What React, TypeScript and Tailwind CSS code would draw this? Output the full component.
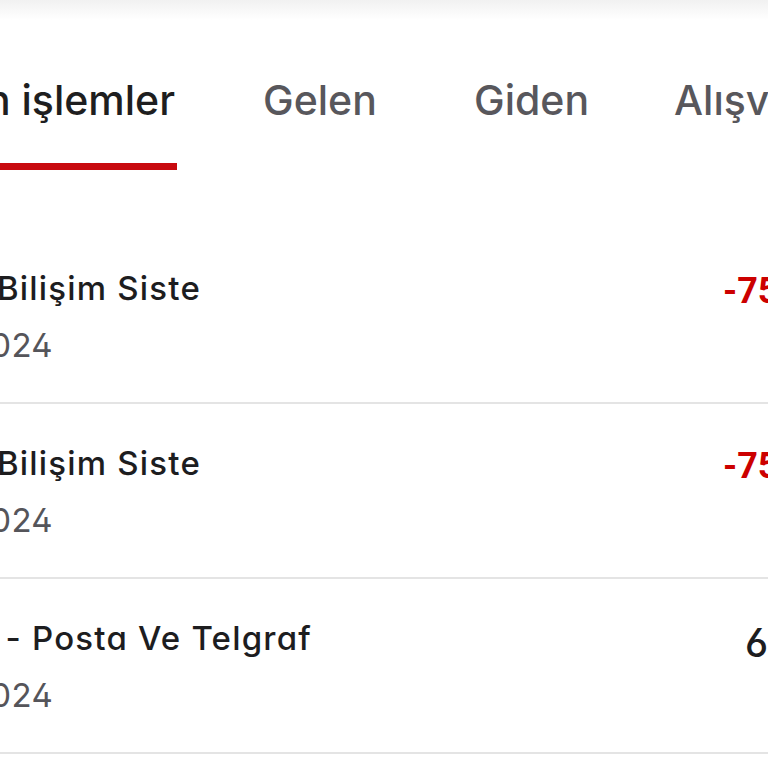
import React from "react";

const geo = "[font-family:Inter,'Noto_Sans',sans-serif] [font-feature-settings:'cv11','ss01']";

function Row({
  title,
  titleEnd,
  date,
  amount,
  amountClass,
  amountPad,
}: {
  title: string;
  titleEnd: string;
  date: string;
  amount: string;
  amountClass: string;
  amountPad: string;
}) {
  return (
    <div className="flex border-b-2 border-[#e4e4e4] pt-[43px] pb-[40px]">
      <div className="flex min-w-0 flex-1 flex-col gap-[24px]">
        <div className={`flex ${titleEnd} justify-end`}>
          <span className={`${geo} whitespace-nowrap text-[33px] leading-[33px] font-medium tracking-[1.2px] text-[#1d1d1f]`}>
            {title}
          </span>
        </div>
        <div className="flex w-[53px] justify-end">
          <span className={`${geo} whitespace-nowrap text-[33px] leading-[33px] font-normal tracking-[0.3px] text-[#55555a]`}>
            {date}
          </span>
        </div>
      </div>
      <div className={`w-[45px] shrink-0 ${amountPad}`}>
        <span className={`whitespace-nowrap ${amountClass}`}>{amount}</span>
      </div>
    </div>
  );
}

export default function App() {
  return (
    <div className="h-[768px] w-[768px] overflow-hidden bg-white">
      <div className="h-[20px] bg-gradient-to-b from-[#f1f1f1] to-white" />
      <div className="mt-[60px] flex items-start">
        <div className="flex w-[177px] shrink-0 flex-col items-end">
          <span className={`${geo} whitespace-nowrap pr-[2px] text-[41px] leading-[41px] font-medium text-[#1e1e20]`}>
            Son işlemler
          </span>
          <div className="mt-[42px] h-[7px] w-full bg-[#c80a0f]" />
        </div>
        <div className="w-[297px] shrink-0 pl-[86px]">
          <span className={`${geo} whitespace-nowrap text-[41px] leading-[41px] font-medium text-[#58575c]`}>
            Gelen
          </span>
        </div>
        <div className="w-[200px] shrink-0">
          <span className={`${geo} whitespace-nowrap text-[41px] leading-[41px] font-medium text-[#58575c]`}>
            Giden
          </span>
        </div>
        <div className="shrink-0">
          <span className={`${geo} whitespace-nowrap text-[41px] leading-[41px] font-medium text-[#58575c]`}>
            Alışveriş
          </span>
        </div>
      </div>
      <div className="mt-[59px]">
        <Row
          title="Turkcell Bilişim Siste"
          titleEnd="w-[201px]"
          date="08.05.2024"
          amount="-750,00 TL"
          amountClass="[font-family:Roboto,'Liberation_Sans',sans-serif] font-bold text-[36px] leading-[33px] text-[#cc0000] relative top-[3px]"
          amountPad=""
        />
        <Row
          title="Turkcell Bilişim Siste"
          titleEnd="w-[201px]"
          date="03.05.2024"
          amount="-750,00 TL"
          amountClass="[font-family:Roboto,'Liberation_Sans',sans-serif] font-bold text-[36px] leading-[33px] text-[#cc0000] relative top-[3px]"
          amountPad=""
        />
        <Row
          title="Ptt - Posta Ve Telgraf"
          titleEnd="w-[312px]"
          date="02.05.2024"
          amount="650,00 TL"
          amountClass={`${geo} font-medium text-[39px] leading-[33px] text-[#1d1d1f] relative top-[4px]`}
          amountPad="pl-[22px]"
        />
      </div>
    </div>
  );
}
